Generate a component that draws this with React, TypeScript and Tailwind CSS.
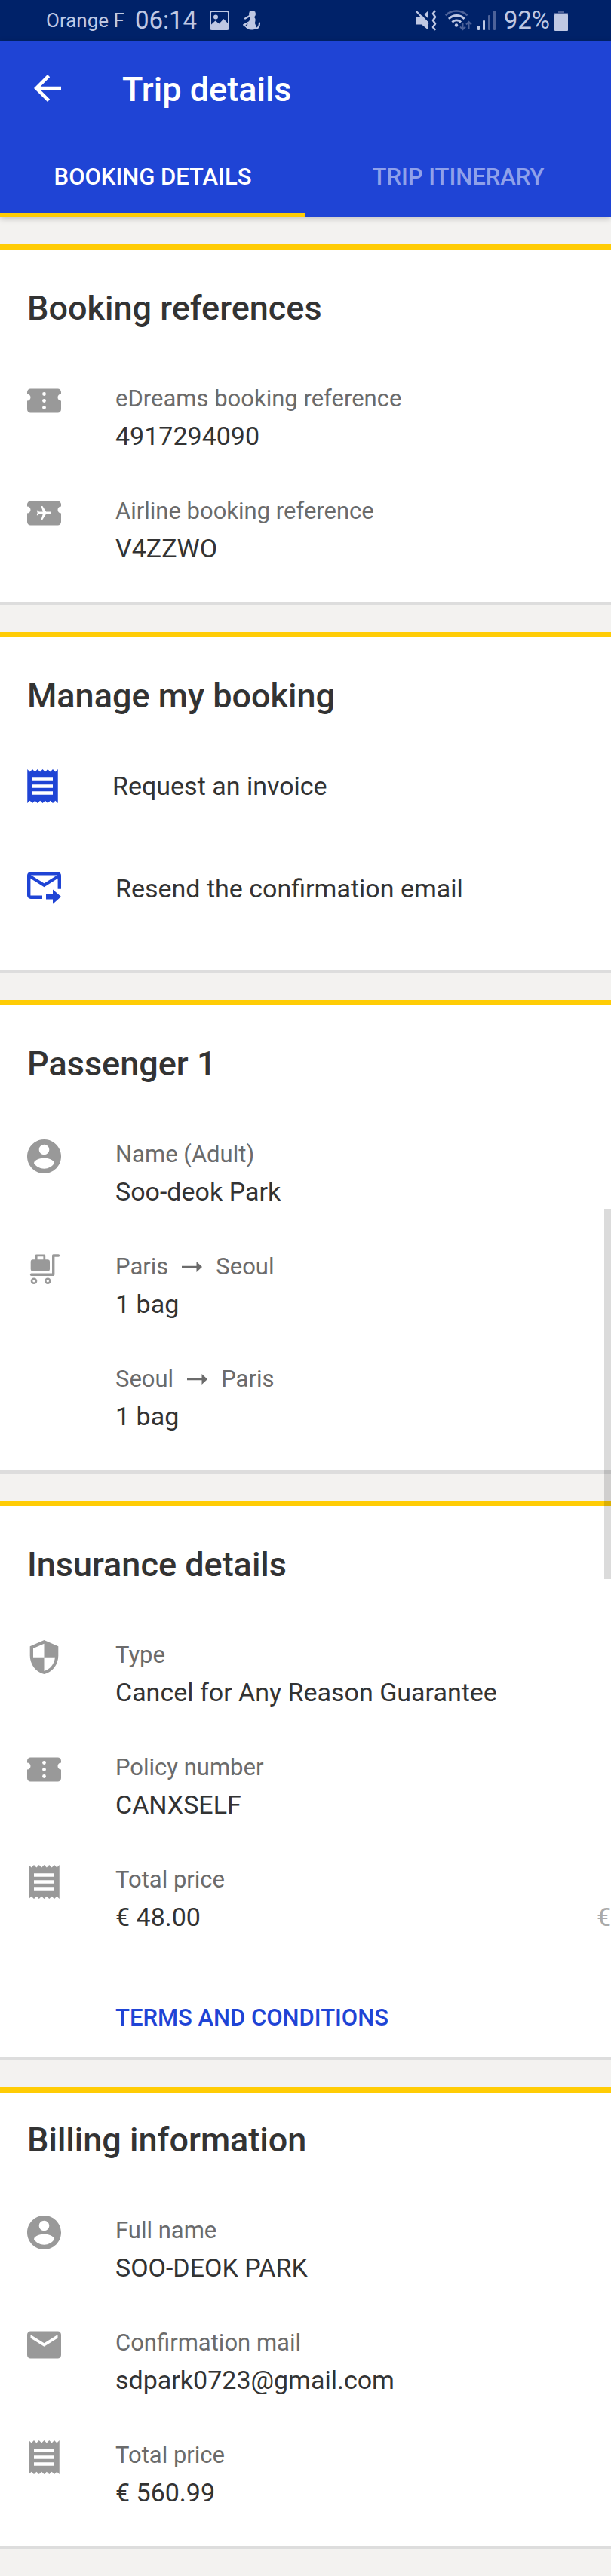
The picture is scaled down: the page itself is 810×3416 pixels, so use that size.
import type { ReactNode } from 'react'

function ReceiptIcon({ className }: { className?: string }) {
  return (
    <svg viewBox="3 2 18 20" className={className} fill="currentColor" aria-hidden="true">
      <path d="M18 17H6v-2h12v2zm0-4H6v-2h12v2zm0-4H6V7h12v2zM3 22l1.5-1.5L6 22l1.5-1.5L9 22l1.5-1.5L12 22l1.5-1.5L15 22l1.5-1.5L18 22l1.5-1.5L21 22V2l-1.5 1.5L18 2l-1.5 1.5L15 2l-1.5 1.5L12 2l-1.5 1.5L9 2 7.5 3.5 6 2 4.5 3.5 3 2v20z" />
    </svg>
  )
}

function TicketShape({ children }: { children: ReactNode }) {
  return (
    <svg viewBox="0 0 45 45" className="size-[45px]" aria-hidden="true">
      <path
        fill="#999"
        d="M4.5 6.5h36A4.5 4.5 0 0 1 45 11v2.5a4.5 4.5 0 0 0 0 9V34a4.5 4.5 0 0 1-4.5 4.5h-36A4.5 4.5 0 0 1 0 34V22.5a4.5 4.5 0 0 0 0-9V11a4.5 4.5 0 0 1 4.5-4.5z"
      />
      {children}
    </svg>
  )
}

function TicketIcon() {
  return (
    <TicketShape>
      <circle cx="22.5" cy="13.5" r="2.4" fill="#fff" />
      <circle cx="22.5" cy="22.5" r="2.4" fill="#fff" />
      <circle cx="22.5" cy="31.5" r="2.4" fill="#fff" />
    </TicketShape>
  )
}

function FlightTicketIcon() {
  return (
    <TicketShape>
      <path
        fill="#fff"
        transform="translate(22.5 22.5) rotate(90) scale(0.95) translate(-12 -11.75)"
        d="M21 16v-2l-8-5V3.5c0-.83-.67-1.5-1.5-1.5S10 2.67 10 3.5V9l-8 5v2l8-2.5V19l-2 1.5V22l3.5-1 3.5 1v-1.5L13 19v-5.5l8 2.5z"
      />
    </TicketShape>
  )
}

function PersonIcon() {
  return (
    <svg viewBox="2 2 20 20" className="size-[45px]" fill="currentColor" aria-hidden="true">
      <path d="M12 2C6.48 2 2 6.48 2 12s4.48 10 10 10 10-4.48 10-10S17.52 2 12 2zm0 3c1.66 0 3 1.34 3 3s-1.34 3-3 3-3-1.34-3-3 1.34-3 3-3zm0 14.2c-2.5 0-4.71-1.28-6-3.22.03-1.99 4-3.08 6-3.08 1.99 0 5.97 1.09 6 3.08-1.29 1.94-3.5 3.22-6 3.22z" />
    </svg>
  )
}

function BaggageIcon() {
  return (
    <svg viewBox="0 0 45 45" className="size-[45px]" aria-hidden="true">
      <rect x="4.7" y="10.3" width="25.3" height="15.4" rx="3" fill="#999" />
      <g fill="none" stroke="#999" strokeLinejoin="round" strokeLinecap="round">
        <path strokeWidth="2.8" d="M12.2 11V4.8h10.6V11" />
        <path strokeWidth="3.4" d="M5.5 30.2h29.2V5H41.5" />
        <circle strokeWidth="2.6" cx="9" cy="38.7" r="3" />
        <circle strokeWidth="2.6" cx="27.3" cy="38.7" r="3" />
      </g>
    </svg>
  )
}

function ShieldIcon() {
  return (
    <svg viewBox="0 0 45 45" className="size-[45px]" aria-hidden="true">
      <path
        fill="#999"
        d="M22.5 0 41.3 8.2V20.5C41.3 32 33.5 42.5 22.5 45 11.5 42.5 3.7 32 3.7 20.5V8.2z"
      />
      <path fill="#fff" d="M22.5 4.8V22.7H8V11z" />
      <path fill="#fff" d="M22.5 22.7H37C36 31.5 30.5 38.5 22.5 40.9z" />
    </svg>
  )
}

function MailIcon() {
  return (
    <svg viewBox="2 2 20 20" className="size-[45px]" fill="currentColor" aria-hidden="true">
      <path d="M20 4H4c-1.1 0-1.99.9-1.99 2L2 18c0 1.1.9 2 2 2h16c1.1 0 2-.9 2-2V6c0-1.1-.9-2-2-2zm0 4l-8 5-8-5V6l8 5 8-5v2z" />
    </svg>
  )
}

function ResendIcon() {
  return (
    <svg viewBox="0 0 45 45" className="size-[45px]" aria-hidden="true">
      <path
        fill="none"
        stroke="currentColor"
        strokeWidth="4.4"
        d="M20 33.8H4.7A2.5 2.5 0 0 1 2.2 31.3V4.7A2.5 2.5 0 0 1 4.7 2.2H40.3A2.5 2.5 0 0 1 42.8 4.7V22.8"
      />
      <path fill="none" stroke="currentColor" strokeWidth="4" d="M3 5.5 22.5 17.8 42 5.5" />
      <path fill="currentColor" d="M25 29.7h9v-6.2L45 33 34 42.7v-6.3h-9z" />
    </svg>
  )
}

function RouteLabel({ from, to }: { from: string; to: string }) {
  return (
    <span className="flex items-center gap-[18px]">
      {from}
      <svg viewBox="0 0 27 14" className="w-[27px] h-[14px]" fill="currentColor" role="img" aria-label="to">
        <path d="M0 5.7h19.5V0L27 7l-7.5 7V8.3H0z" />
      </svg>
      {to}
    </span>
  )
}

function StatusBar() {
  return (
    <div className="flex items-center justify-between h-[54px] bg-[#002269] text-[#bfc8e3] pl-[61px] pr-[57px]">
      <div className="flex items-center">
        <span className="text-[26px]">Orange F</span>
        <span className="ml-[14px] text-[33px]">06:14</span>
        <svg viewBox="0 0 26 26" className="ml-[17px] size-[26px]" aria-hidden="true">
          <rect x="1" y="1" width="24" height="24" rx="2" fill="none" stroke="currentColor" strokeWidth="2" />
          <circle cx="8" cy="8.5" r="3" fill="currentColor" />
          <path fill="currentColor" d="M1 19.5 7.5 13.5l5 4L18.5 11 25 18v7H1z" />
        </svg>
        <svg viewBox="0 0 24 26" className="ml-[18px] w-[24px] h-[26px]" aria-hidden="true">
          <circle cx="12.5" cy="4.5" r="4.5" fill="currentColor" />
          <path fill="currentColor" d="M9 8c3-1 7 0 7.5 3 .4 2.5-.5 4-.5 6l2 5c-1 3-4 3.5-7 3.500-3 0-6-1.500-7-3.500l3-5 2-5z" />
          <path
            fill="none"
            stroke="currentColor"
            strokeWidth="2.2"
            strokeLinecap="round"
            d="M3 10.5 9 7M8 15.5 1.5 19l5 4M16 24c4 0 6-3 6-7.5"
          />
        </svg>
      </div>
      <div className="flex items-center">
        <svg viewBox="0 0 28 28" className="size-[28px]" aria-hidden="true">
          <path fill="currentColor" d="M1 9h5l3-1 8 8.5V27l-9-7.5H1a1 1 0 0 1-1-1V10a1 1 0 0 1 1-1zM11.500 6 17 1v11z" />
          <path fill="none" stroke="currentColor" strokeWidth="2.4" d="M1 2 17 18.5" />
          <path
            fill="none"
            stroke="currentColor"
            strokeWidth="2.6"
            strokeLinejoin="round"
            d="M26 1l-3 4 3 4.500-3 4.500 3 4.500-3 4.500 3 4"
          />
        </svg>
        <svg viewBox="0 0 36 28" className="ml-[11px] w-[36px] h-[28px]" fill="none" aria-hidden="true">
          <path stroke="#4d6299" strokeWidth="2.5" d="M.8 7.5C8-.5 22-.5 29.5 7.5" />
          <g stroke="currentColor" strokeWidth="2.8">
            <path d="M5 12c5.5-6 15.5-6 20.5 0" />
            <path d="M9.5 16.5c3-3.5 8.5-3.5 11.5 0" />
          </g>
          <circle cx="15" cy="20.5" r="2.2" fill="currentColor" />
          <path stroke="#4d6299" strokeWidth="2" d="M23.5 17v9M20 22.5l3.5 3.5 3.5-3.5M31.5 25v-9M28 19.5l3.5-3.5 3.5 3.5" />
        </svg>
        <svg viewBox="0 0 24 26" className="ml-[7px] w-[24px] h-[26px]" aria-hidden="true">
          <rect x="0" y="20" width="3" height="6" rx="1" fill="currentColor" />
          <rect x="7" y="13" width="3" height="13" rx="1" fill="currentColor" />
          <rect x="14" y="6" width="3" height="20" rx="1" fill="#4d6299" />
          <rect x="21" y="0" width="3" height="26" rx="1" fill="#4d6299" />
        </svg>
        <span className="ml-[11px] text-[33px]">92%</span>
        <svg viewBox="0 0 18 27" className="ml-[6px] w-[18px] h-[27px]" aria-hidden="true">
          <path fill="#4d6299" d="M5 0h8v3h5v3H0V3h5z" />
          <rect y="5" width="18" height="22" rx="1" fill="currentColor" />
        </svg>
      </div>
    </div>
  )
}

function Header() {
  return (
    <header className="relative bg-[#1f44d5] text-white shadow-[0_2px_8px_rgba(0,0,0,0.2)]">
      <div className="flex items-center h-[126px] px-[45px]">
        <button type="button" aria-label="Back">
          <svg viewBox="4 4 16 16" className="size-[36px]" fill="currentColor" aria-hidden="true">
            <path d="M20 11H7.83l5.59-5.59L12 4l-8 8 8 8 1.41-1.41L7.83 13H20v-2z" />
          </svg>
        </button>
        <h1 className="ml-[81px] pt-[3px] text-[45px] leading-[54px] font-medium">Trip details</h1>
      </div>
      <nav className="grid grid-cols-2 h-[108px] text-[31px] font-medium">
        <button type="button" className="pt-[7px] border-b-5 border-b-[#ffcc05]">
          BOOKING DETAILS
        </button>
        <button type="button" className="pt-[2px] text-[#8fa1ea]">
          TRIP ITINERARY
        </button>
      </nav>
    </header>
  )
}

function Card({ title, className, children }: { title: string; className: string; children: ReactNode }) {
  return (
    <section className={`bg-white border-t-7 border-t-[#ffcc05] border-b-4 border-b-[#dddddd] pl-[36px] ${className}`}>
      <h2 className="mb-[67px] text-[45px] leading-[54px] font-medium">{title}</h2>
      {children}
    </section>
  )
}

function Details({ children }: { children: ReactNode }) {
  return <dl className="flex flex-col gap-[51px]">{children}</dl>
}

type DetailProps = {
  icon?: ReactNode
  label: ReactNode
  value: string
  aside?: string
}

function Detail({ icon, label, value, aside }: DetailProps) {
  return (
    <div className="grid grid-cols-[117px_1fr]">
      <div className="row-span-2 flex justify-center w-[45px] pt-[6px] text-[#999]">{icon}</div>
      <dt className="text-[31px] leading-[52px] text-[#6b6b6b]">{label}</dt>
      <dd className="flex justify-between text-[34px] leading-[46px]">
        {value}
        {aside && <span className="text-[#aaa]">{aside}</span>}
      </dd>
    </div>
  )
}

function Action({ icon, children }: { icon: ReactNode; children: ReactNode }) {
  return (
    <button type="button" className="flex items-center gap-[72px] text-[34px] leading-[50px]">
      <span className="text-[#1f44d5]">{icon}</span>
      {children}
    </button>
  )
}

export default function App() {
  return (
    <div className="relative bg-[#f3f2f0] text-[#333] font-['Roboto',sans-serif]">
      <StatusBar />
      <Header />
      <main className="flex flex-col gap-[36px] py-[36px]">
        <Card title="Booking references" className="pt-[51px] pb-[48px]">
          <Details>
            <Detail icon={<TicketIcon />} label="eDreams booking reference" value="4917294090" />
            <Detail icon={<FlightTicketIcon />} label="Airline booking reference" value="V4ZZWO" />
          </Details>
        </Card>

        <Card title="Manage my booking" className="pt-[51px] pb-[83px]">
          <div className="flex flex-col items-start gap-[86px]">
            <Action icon={<ReceiptIcon className="w-[41px] h-[45px]" />}>Request an invoice</Action>
            <Action icon={<ResendIcon />}>Resend the confirmation email</Action>
          </div>
        </Card>

        <Card title="Passenger 1" className="pt-[51px] pb-[49px]">
          <Details>
            <Detail icon={<PersonIcon />} label="Name (Adult)" value="Soo-deok Park" />
            <Detail icon={<BaggageIcon />} label={<RouteLabel from="Paris" to="Seoul" />} value="1 bag" />
            <Detail label={<RouteLabel from="Seoul" to="Paris" />} value="1 bag" />
          </Details>
        </Card>

        <Card title="Insurance details" className="pt-[51px] pb-[26px]">
          <Details>
            <Detail icon={<ShieldIcon />} label="Type" value="Cancel for Any Reason Guarantee" />
            <Detail icon={<TicketIcon />} label="Policy number" value="CANXSELF" />
            <Detail
              icon={<ReceiptIcon className="w-[41px] h-[45px]" />}
              label="Total price"
              value="€ 48.00"
              aside="€"
            />
          </Details>
          <a href="#terms" className="block w-fit mt-[85px] ml-[117px] text-[31px] leading-[52px] font-medium text-[#1f44d5]">
            TERMS AND CONDITIONS
          </a>
        </Card>

        <Card title="Billing information" className="pt-[36px] pb-[48px]">
          <Details>
            <Detail icon={<PersonIcon />} label="Full name" value="SOO-DEOK PARK" />
            <Detail icon={<MailIcon />} label="Confirmation mail" value="sdpark0723@gmail.com" />
            <Detail icon={<ReceiptIcon className="w-[41px] h-[45px]" />} label="Total price" value="€ 560.99" />
          </Details>
        </Card>
      </main>

      {/* scroll thumb floating over the cards */}
      <div className="absolute right-0 top-[1603px] w-[9px] h-[491px] bg-black/14" />
    </div>
  )
}
